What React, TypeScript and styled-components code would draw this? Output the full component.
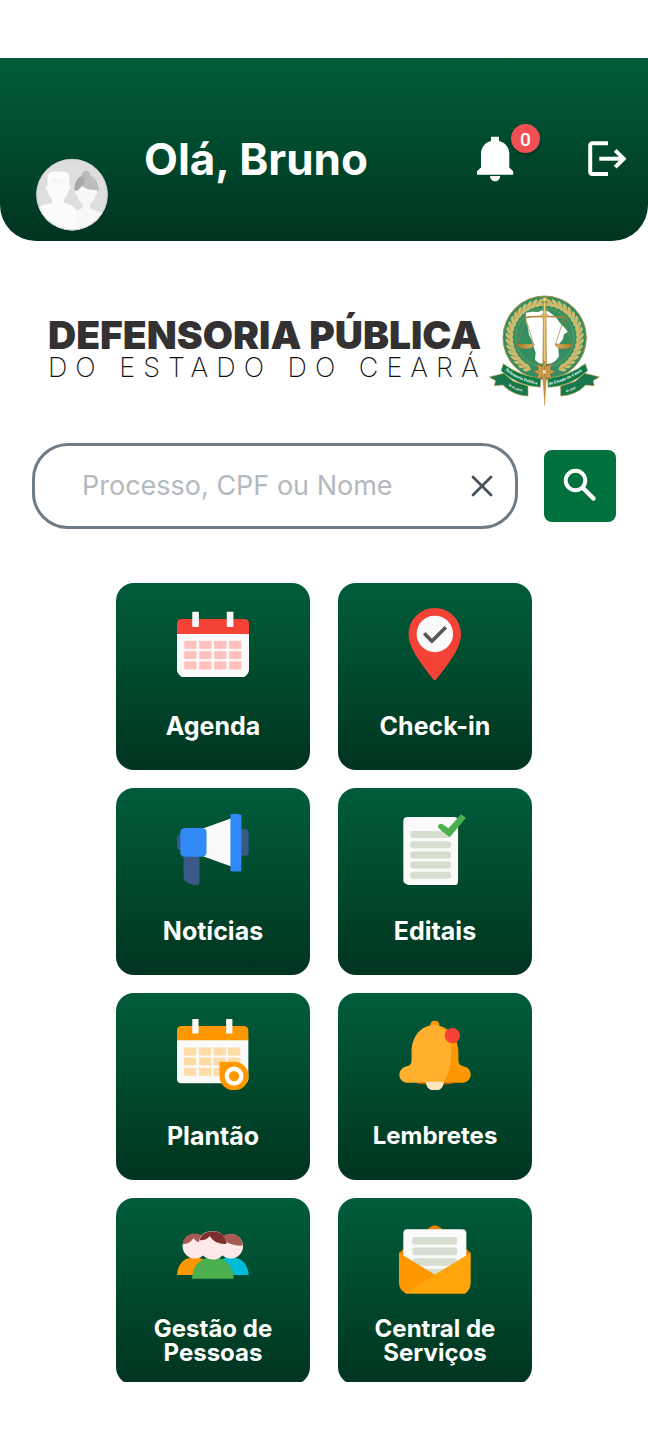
import React from "react";
import styled, { createGlobalStyle } from "styled-components";

const GlobalStyle = createGlobalStyle`
  * { box-sizing: border-box; }
  body { margin: 0; background: #fff; font-family: Inter, Roboto, sans-serif; }
  button { font: inherit; border: 0; padding: 0; background: none; cursor: pointer; }
`;

const gradient = "linear-gradient(180deg, #005c3a 0%, #004a2d 48%, #003420 100%)";

const Screen = styled.div`
  height: 100vh;
  padding: 58px 0;
  display: flex;
  flex-direction: column;
`;

const Header = styled.header`
  flex: none;
  display: flex;
  align-items: flex-start;
  padding: 74px 21px 10px 36px;
  border-radius: 0 0 36px 36px;
  background: ${gradient};
`;

const Avatar = styled.svg`
  flex: none;
  width: 72px;
  height: 73px;
  margin-top: 26px;
`;

const Greeting = styled.h1`
  flex: 1;
  margin: 0 0 0 36px;
  color: #fff;
  font-size: 44px;
  font-weight: 700;
  line-height: 54px;
  white-space: nowrap;
`;

const HeaderActions = styled.div`
  display: flex;
  gap: 65px;
`;

const HeaderButton = styled.button`
  position: relative;
  display: flex;
  color: #fff;
`;

const Badge = styled.span`
  position: absolute;
  left: 43px;
  top: -8px;
  width: 29px;
  height: 29px;
  border-radius: 50%;
  background: #f05053;
  box-shadow: 0 2px 4px rgba(0, 0, 0, 0.3);
  color: #fff;
  font: 500 19px/31px Roboto, sans-serif;
  text-align: center;
`;

const Brand = styled.div`
  flex: none;
  display: flex;
  align-items: center;
  gap: 10px;
  padding: 53px 48px 37px;
`;

const BrandText = styled.div`
  flex: 1;
  min-width: 0;
  color: #343132;
  white-space: nowrap;
`;

const BrandName = styled.div`
  font-size: 39px;
  font-weight: 900;
  line-height: 36px;
`;

const BrandState = styled.div`
  color: #111;
  font-size: 27px;
  font-weight: 200;
  line-height: 30px;
  letter-spacing: 8px;
`;

const SearchForm = styled.form`
  flex: none;
  display: flex;
  align-items: center;
  gap: 26px;
  padding: 0 32px;
`;

const SearchField = styled.div`
  flex: 1;
  min-width: 0;
  display: flex;
  align-items: center;
  height: 86px;
  padding: 0 21px 0 47px;
  border: 3px solid #6f7b85;
  border-radius: 36px;
`;

const SearchInput = styled.input`
  flex: 1;
  min-width: 0;
  border: 0;
  outline: 0;
  padding: 0;
  background: none;
  color: #44525f;
  font: 400 27px/32px Inter, sans-serif;
  &::placeholder { color: #b3b9be; opacity: 1; }
`;

const ClearButton = styled.button`
  display: flex;
`;

const SearchButton = styled.button`
  flex: none;
  width: 72px;
  height: 72px;
  display: flex;
  align-items: center;
  justify-content: center;
  border-radius: 8px;
  background: #00703c;
`;

const TileArea = styled.main`
  flex: 1;
  min-height: 0;
  overflow-y: auto;
  scrollbar-width: none;
  margin-top: 54px;
`;

const TileGrid = styled.nav`
  display: grid;
  grid-template-columns: repeat(2, 194px);
  gap: 18px 28px;
  justify-content: center;
`;

const Tile = styled.button`
  height: 187px;
  display: flex;
  flex-direction: column;
  align-items: center;
  padding: 25px 16px 0;
  border-radius: 18px;
  background: ${gradient};
`;

const TileIcon = styled.svg`
  flex: none;
  width: 72px;
  height: 72px;
`;

const TileLabel = styled.span<{ $long: boolean }>`
  flex: 1;
  display: flex;
  align-items: center;
  padding-top: 2px;
  color: #fff;
  font-size: ${({ $long }) => ($long ? 24 : 25)}px;
  font-weight: 700;
  line-height: 24px;
`;

const AvatarArt = () => (
  <Avatar viewBox="47 38 218 219" role="img" aria-label="Foto do perfil">
    <defs>
      <clipPath id="face"><circle cx="156" cy="148" r="108" /></clipPath>
    </defs>
    <circle cx="156" cy="148" r="108" fill="#dedede" />
    <g clipPath="url(#face)">
      <path d="M164 133c0-26 8-38 22-43-2-9 5-14 13-14s15 7 12 15c18 7 27 24 25 49l-72-5z" fill="#bcbcbc" />
      <path d="M164 133c0-24 8-36 24-41 8 4 10 14 2 25-8 8-16 10-18 20z" fill="#a8a8a8" />
      <path d="M166 139c10-5 16-9 20-17 12 10 28 12 44 12 5 2 5 13-2 14-3 16-10 24-17 28v12c10 8 30 8 37 18l8 60H150l8-66c8-8 26-6 30-14v-10c-8-4-13-12-15-26-6 0-9-6-7-11z" fill="#f8f8f8" />
      <path d="M82 120V96c0-12 6-17 18-17 10-2 20-2 31 0 11 0 17 5 17 17v24c5 1 4 12-1 13-3 14-9 23-16 28v11c12 8 32 6 36 20v76H40l20-82c4-10 26-8 36-15v-10c-8-6-12-14-15-28-5-2-5-12 1-13z" fill="#fcfcfc" />
      <path d="M90 102q26-6 50 1v10q-26-5-50 0z" fill="#f5f5f5" />
    </g>
    <circle cx="156" cy="148" r="107" fill="none" stroke="#c9c9c9" strokeWidth="3" />
  </Avatar>
);

const BellIcon = () => (
  <svg width="54" height="54" viewBox="0 0 54 54" fill="currentColor" aria-hidden="true">
    <path d="M23 4.700h8v4.400c6.400 1.600 10.300 6.500 10.300 12.900v13.400l3.900 3.800v3.500H9v-3.500l4-3.800V22C13 15.600 16.800 10.700 23 9.100z" />
    <path d="M22 44h10.200c-.2 3.200-2.300 5.300-5.100 5.300S22.200 47.200 22 44z" />
  </svg>
);

const LogoutIcon = () => (
  <svg width="40" height="54" viewBox="0 0 40 54" fill="none" stroke="currentColor" strokeWidth="4" aria-hidden="true">
    <path d="M21 11.300H5.500Q3.200 11.300 3.200 13.600v26Q3.200 42 5.500 42H21" />
    <path d="M12.300 26.700h25" />
    <path d="M28.200 18.300l8.500 8.400-8.500 8.400" />
  </svg>
);

const leafAngles = Array.from({ length: 17 }, (_, i) => 12 + i * 9);

const Leaves = () => (
  <>
    {leafAngles.map((a) => (
      <g key={a}>
        <g transform={`rotate(${a} 194 158)`}>
          <path d="M194 53c-10-12-16-11-20-9 3 8 10 11 20 9zM194 53c-8 9-14 13-21 9 5-8 12-10 21-9z" fill="#dcc273" stroke="#dcc273" strokeWidth="2" />
          <path d="M190 53l-13-6M190 54l-12 6" stroke="#a88d3c" strokeWidth="1" />
        </g>
        <g transform={`rotate(${-a} 194 158)`}>
          <path d="M194 53c10-12 16-11 20-9-3 8-10 11-20 9zM194 53c8 9 14 13 21 9-5-8-12-10-21-9z" fill="#dcc273" stroke="#dcc273" strokeWidth="2" />
          <path d="M198 53l13-6M198 54l12 6" stroke="#a88d3c" strokeWidth="1" />
        </g>
      </g>
    ))}
  </>
);

const EmblemArt = styled.svg`
  flex: none;
  width: 111px;
  height: 112px;
`;

const Emblem = () => (
  <EmblemArt viewBox="27 27 333 336" role="img" aria-label="Brasão da Defensoria Pública">
    <defs>
      <linearGradient id="gold" x1="0" x2="1">
        <stop offset="0" stopColor="#a8792b" />
        <stop offset=".5" stopColor="#f0d486" />
        <stop offset="1" stopColor="#a8792b" />
      </linearGradient>
      <path id="ribbonLeft" d="M76 256Q118 290 180 300" />
      <path id="ribbonRight" d="M206 300Q262 290 312 254" />
      <path id="tailLeft" d="M84 301Q108 318 142 323" />
      <path id="tailRight" d="M258 322Q284 316 308 298" />
    </defs>
    <circle cx="194" cy="158" r="125" fill="#338e61" stroke="#ab8b3e" strokeWidth="3" />
    <circle cx="194" cy="158" r="87" fill="none" stroke="#8da45a" strokeWidth="2" />
    <Leaves />
    <path d="M138 83l16-3 20 1 14-5 16 3 12 8 12 10 12 17 14 14 10 12-12 8-4 16-10 12-3 20 2 18-10 13-12 8-18 3-20-3-12-10 2-22-6-18-6-20-8-16-4-24-6-18z" fill="#fff" />
    <path d="M134 98q28-5 58-3 30-2 64 3" fill="none" stroke="#ad8130" strokeWidth="5" />
    <path d="M137 100l-24 78M137 100l24 78M251 100l-24 78M251 100l24 78" stroke="#9c8238" strokeWidth="2" />
    <path d="M110 177h54c-4 10-13 15-27 15s-23-5-27-15zM224 177h54c-4 10-13 15-27 15s-23-5-27-15z" fill="url(#gold)" stroke="#8c6727" strokeWidth="1" />
    <path d="M190 50h8l2 210-6 101-6-101z" fill="url(#gold)" stroke="#a37627" strokeWidth="1" />
    <circle cx="194" cy="44" r="7" fill="#e9cf84" stroke="#a37627" strokeWidth="2" />
    <path d="M183 88h22v9h-22z" fill="#d6ad56" />
    <path d="M28 276l44-11 28 24 44 14v30q-46-2-75-33l-26 2 4-15z" fill="#18774b" stroke="#b49a4b" strokeWidth="2" />
    <path d="M358 276l-44-11-28 24-44 14v30q46-2 75-33l26 2-4-15z" fill="#18774b" stroke="#b49a4b" strokeWidth="2" />
    <path d="M70 236q50 38 113 43l-2 28q-66-3-118-50z" fill="#0c7a48" stroke="#c4ab60" strokeWidth="2" />
    <path d="M316 236q-50 38-113 43l1 28q68-3 119-50z" fill="#0c7a48" stroke="#c4ab60" strokeWidth="2" />
    <g fill="#fff" fontFamily="Liberation Serif, serif" fontWeight="700" fontSize="13">
      <text><textPath href="#ribbonLeft">Defensoria Pública</textPath></text>
      <text><textPath href="#ribbonRight">do Estado do Ceará</textPath></text>
      <text fontSize="10"><textPath href="#tailLeft">28 de abril</textPath></text>
      <text fontSize="10"><textPath href="#tailRight">de 1997</textPath></text>
    </g>
    <path d="M193 229l6 17 15-9-4 17 17 6-17 6 5 17-16-8-6 17-7-17-15 8 5-17-17-6 17-6-5-17 16 9z" fill="#d3a753" stroke="#99692a" strokeWidth="2" />
    <path d="M193 243v34M176 260h34M181 248l24 24M205 248l-24 24" stroke="#87591f" strokeWidth="2" />
    <circle cx="193" cy="260" r="6" fill="#f1d798" />
    <path d="M190 290h8l-4 72z" fill="#c6913b" />
  </EmblemArt>
);

const CloseIcon = () => (
  <svg width="24" height="24" viewBox="0 0 24 24" stroke="#44525f" strokeWidth="2.800" strokeLinecap="round" aria-hidden="true">
    <path d="M3 3l18 18M21 3L3 21" />
  </svg>
);

const SearchIcon = () => (
  <svg width="40" height="40" viewBox="0 0 40 40" fill="none" stroke="#fff" strokeWidth="4" strokeLinecap="round" aria-hidden="true">
    <circle cx="15.500" cy="14.500" r="9.800" />
    <path d="M23 22l10.500 10.500" strokeWidth="4.500" />
  </svg>
);

const cells = (xs: number[], ys: number[], fill: string) =>
  ys.map((y) => xs.map((x) => <rect key={`${x}-${y}`} x={x} y={y} width="37" height="24" fill={fill} />));

const AgendaIcon = () => (
  <TileIcon viewBox="202 99 217 217" aria-hidden="true">
    <path d="M202 174h217v112q0 10-14 21H216q-14-11-14-21z" fill="#fafafa" />
    <path d="M202 177v-31q0-14 14-14h189q14 0 14 14v31z" fill="#f44336" />
    <rect x="248" y="110" width="20" height="46" rx="2" fill="#fafafa" />
    <rect x="352" y="110" width="20" height="46" rx="2" fill="#fafafa" />
    {cells([224, 269, 314, 359], [198, 229, 260], "#ffc1be")}
  </TileIcon>
);

const CheckInIcon = () => (
  <TileIcon viewBox="866 99 217 217" aria-hidden="true">
    <path d="M974 99c44 0 79 35 79 79 0 46-46 98-76 138q-3 4-6 0c-30-40-76-92-76-138 0-44 35-79 79-79z" fill="#f44336" />
    <circle cx="974" cy="177" r="55" fill="#fafafa" />
    <path d="M942 175l23 24 42-42" fill="none" stroke="#57595b" strokeWidth="11" strokeLinejoin="round" />
  </TileIcon>
);

const NewsIcon = () => (
  <TileIcon viewBox="202 84 217 217" aria-hidden="true">
    <path d="M222 205h48v86q0 10-10 11-38-6-38-23z" fill="#3a5a85" />
    <path d="M216 149h-6q-8 0-8 9v28q0 9 8 9h6zM390 132h17q11 0 11 11v59q0 11-11 11h-17z" fill="#3a5a85" />
    <path d="M280 131l88-32v147l-88-32z" fill="#fafafa" />
    <rect x="212" y="129" width="79" height="87" rx="13" fill="#3089f4" />
    <path d="M363 88q15-5 33 2v166q0 4-4 4h-25q-4 0-4-4z" fill="#3089f4" />
  </TileIcon>
);

const NoticesIcon = () => (
  <TileIcon viewBox="866 84 217 217" aria-hidden="true">
    <path d="M892 96h139q13 0 13 13v181q0 12-12 12H896q-17-6-17-14V109q0-13 13-13z" fill="#fafafa" />
    {[138, 169, 200, 230, 261].map((y) => (
      <rect key={y} x="900" y={y} width="123" height="21" rx="7" fill="#d6ded0" />
    ))}
    <path d="M996 117q-7-3-12 5-2 5 4 10l27 22q4 3 7-1l46-55-15-10-38 42z" fill="#4caf50" />
  </TileIcon>
);

const DutyIcon = () => (
  <TileIcon viewBox="202 84 217 217" aria-hidden="true">
    <path d="M202 148h215v119q0 14-14 14H216q-14 0-14-14z" fill="#fafafa" />
    <path d="M202 151v-29q0-14 14-14h187q14 0 14 14v29z" fill="#ff9800" />
    <rect x="248" y="87" width="19" height="44" rx="2" fill="#fafafa" />
    <rect x="350" y="87" width="19" height="44" rx="2" fill="#fafafa" />
    {cells([223, 268, 312, 356], [173, 203, 234], "#ffdba6")}
    <path d="M330 216h44a44 43 0 1 1-44 43z" fill="#ff9800" />
    <circle cx="374" cy="259" r="22" fill="none" stroke="#fff" strokeWidth="13" />
  </TileIcon>
);

const RemindersIcon = () => (
  <TileIcon viewBox="866 84 217 217" aria-hidden="true">
    <path d="M920 270h108v12q-54 8-108 0z" fill="#a35a00" />
    <path d="M960 108q0-16 14-16t14 15c36 10 57 42 57 78v26q0 16 18 19c26 7 26 44-4 49H974z" fill="#ff9800" />
    <path d="M974 104c35 6 49 42 49 85 0 36-6 66-24 90H888c-27-4-28-42-1-49q17-3 17-19v-26c0-42 26-80 70-81z" fill="#ffb02e" />
    <circle cx="1027" cy="137" r="23" fill="#f44336" />
    <path d="M947 276h54q-2 27-27 27t-27-27z" fill="#ffe5bd" />
  </TileIcon>
);

const PeopleIcon = () => (
  <TileIcon viewBox="202 84 217 217" aria-hidden="true">
    <path d="M202 241q4-52 52-54 50 2 54 54z" fill="#ff9800" />
    <path d="M310 241q4-52 54-54 50 2 54 54z" fill="#00bcd8" />
    <circle cx="256" cy="154" r="37" fill="#ffe9e7" />
    <circle cx="364" cy="154" r="37" fill="#ffe9e7" />
    <path d="M219 148c4-42 60-42 71-8-16 10-30 0-38-10-8 12-18 18-33 18zM400 152c-2-40-48-44-66-24 12 16 40 26 66 24z" fill="#a65b55" />
    <path d="M247 252q4-62 62-64 60 2 64 64z" fill="#4caf50" />
    <path d="M268 142c2-46 82-46 83 5 0 62-78 62-84 5z" fill="#ffe9e7" />
    <path d="M270 136c8-38 80-38 81 11-23 1-41-8-50-24-8 10-18 14-31 13z" fill="#7b302d" />
  </TileIcon>
);

const ServicesIcon = () => (
  <TileIcon viewBox="866 84 217 217" aria-hidden="true">
    <path d="M866 174l90-75q18-16 36 0l90 75-20 40H886z" fill="#e78106" />
    <path d="M891 103h165q13 0 13 13v125H879V116q0-13 12-13z" fill="#fafafa" />
    <rect x="906" y="126" width="135" height="23" rx="7" fill="#d6ded0" />
    <rect x="906" y="158" width="135" height="23" rx="7" fill="#d6ded0" />
    <path d="M906 197q2-7 8-7h119q7 0 8 7l-14 16H920zM938 222h72l-36 22z" fill="#d6ded0" />
    <path d="M866 174l112 68-92 54q-20-10-20-32z" fill="#ff9800" />
    <path d="M1082 174v90q0 22-18 33H886v-4z" fill="#ffa40b" />
  </TileIcon>
);

const tiles = [
  { label: "Agenda", Icon: AgendaIcon },
  { label: "Check-in", Icon: CheckInIcon },
  { label: "Notícias", Icon: NewsIcon },
  { label: "Editais", Icon: NoticesIcon },
  { label: "Plantão", Icon: DutyIcon },
  { label: "Lembretes", Icon: RemindersIcon },
  { label: "Gestão de Pessoas", Icon: PeopleIcon },
  { label: "Central de Serviços", Icon: ServicesIcon },
];

export default function App() {
  return (
    <>
      <GlobalStyle />
      <Screen>
        <Header>
          <AvatarArt />
          <Greeting>Olá, Bruno</Greeting>
          <HeaderActions>
            <HeaderButton type="button" aria-label="Notificações">
              <BellIcon />
              <Badge>0</Badge>
            </HeaderButton>
            <HeaderButton type="button" aria-label="Sair">
              <LogoutIcon />
            </HeaderButton>
          </HeaderActions>
        </Header>
        <Brand>
          <BrandText>
            <BrandName>DEFENSORIA PÚBLICA</BrandName>
            <BrandState>DO ESTADO DO CEARÁ</BrandState>
          </BrandText>
          <Emblem />
        </Brand>
        <SearchForm role="search" onSubmit={(e) => e.preventDefault()}>
          <SearchField>
            <SearchInput aria-label="Pesquisar" placeholder="Processo, CPF ou Nome" />
            <ClearButton type="reset" aria-label="Limpar">
              <CloseIcon />
            </ClearButton>
          </SearchField>
          <SearchButton type="submit" aria-label="Buscar">
            <SearchIcon />
          </SearchButton>
        </SearchForm>
        <TileArea>
          <TileGrid>
            {tiles.map(({ label, Icon }) => (
              <Tile key={label} type="button">
                <Icon />
                <TileLabel $long={label.length > 8}>{label}</TileLabel>
              </Tile>
            ))}
          </TileGrid>
        </TileArea>
      </Screen>
    </>
  );
}
